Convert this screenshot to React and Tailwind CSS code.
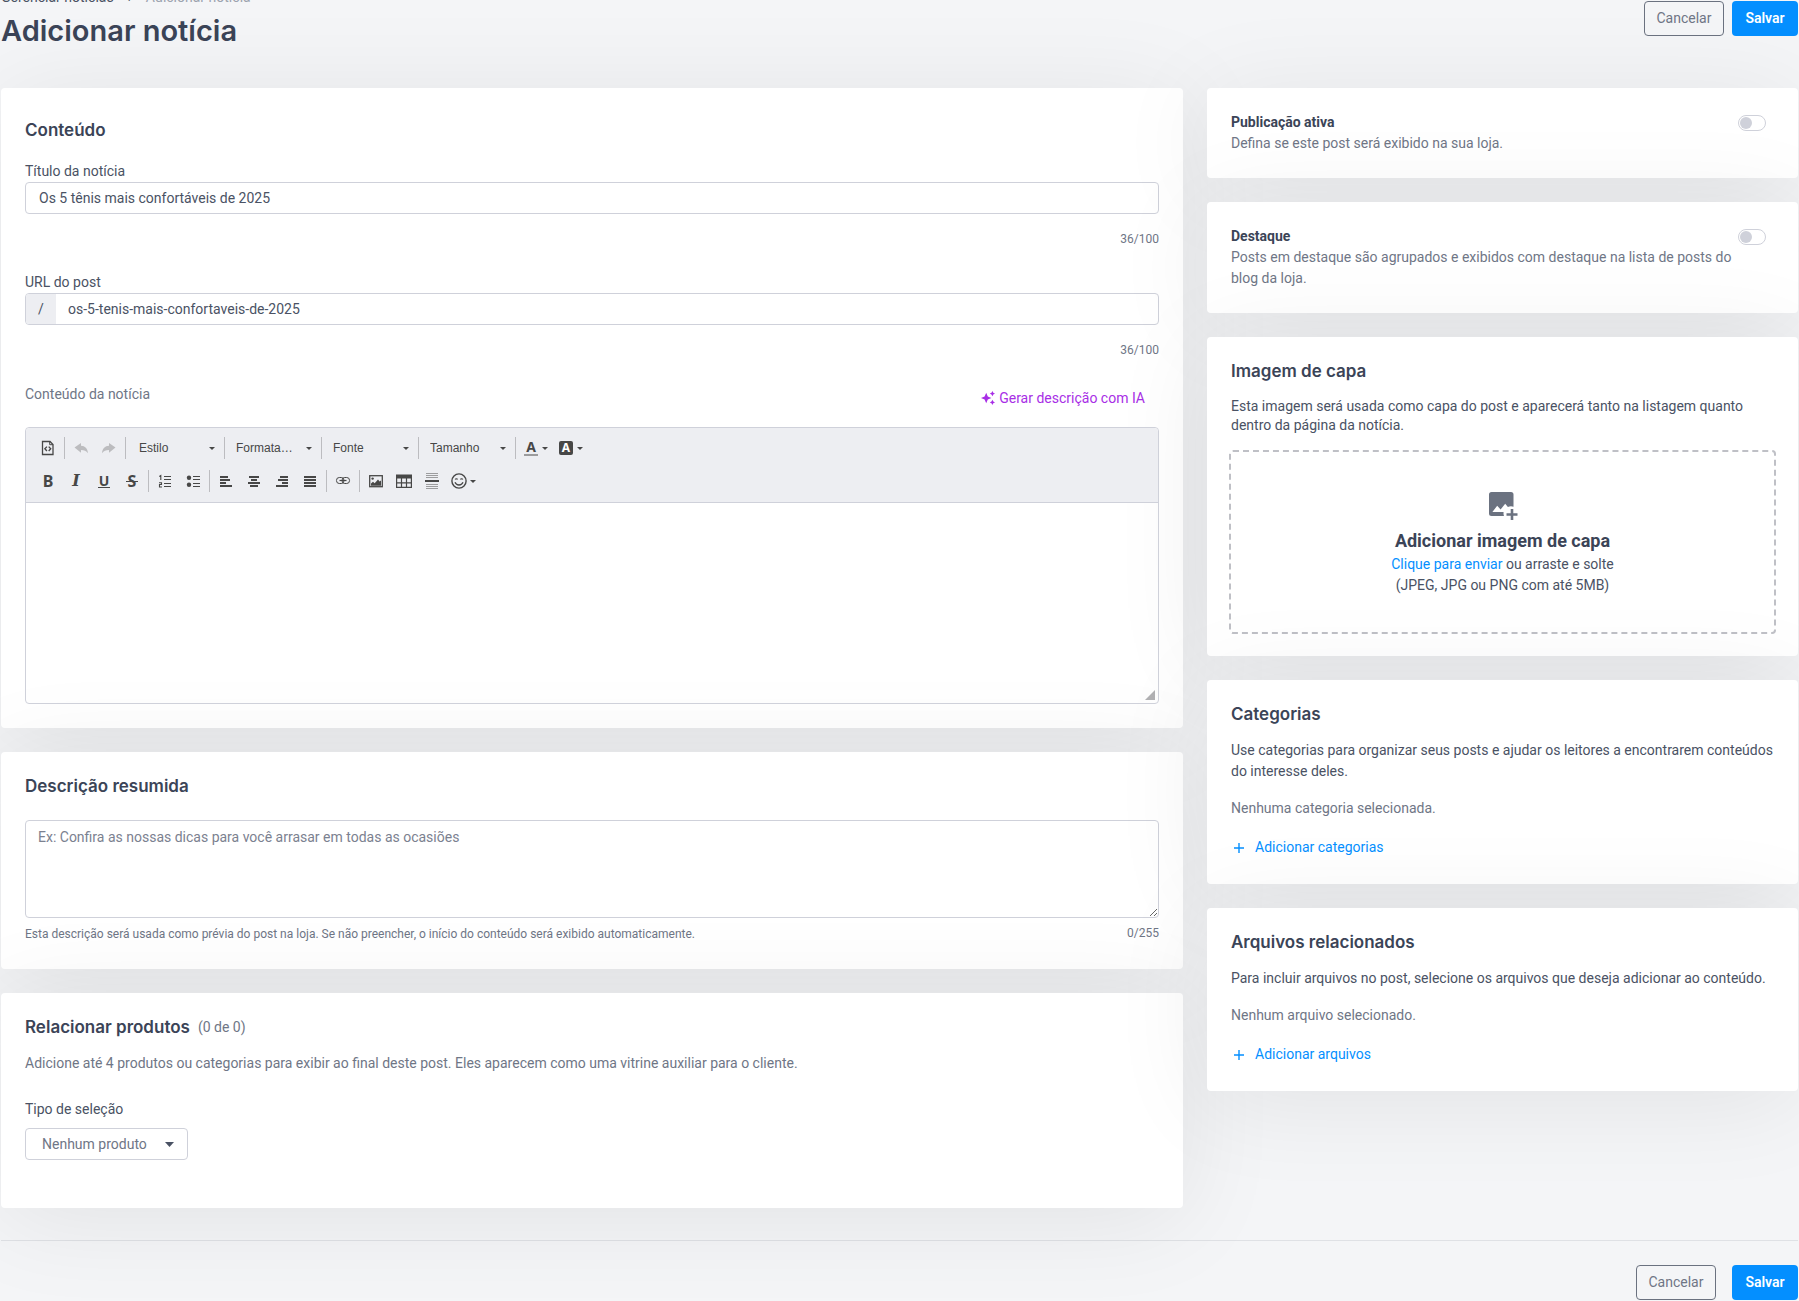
import { useState } from 'react'

const toolBtn = 'flex h-7 w-7 shrink-0 items-center justify-center text-[#474747]'
const fieldBorder = 'rounded border border-[#cfd1da]'

function Card({ className = '', children }) {
  return (
    <section className={`rounded bg-white p-6 shadow-[0_10px_100px_rgba(0,0,0,0.08)] ${className}`}>
      {children}
    </section>
  )
}

function Heading({ children }) {
  return <h2 className="font-['Inter',sans-serif] text-[17px] leading-5 font-semibold text-[#3b4457]">{children}</h2>
}

function Caret({ className = '' }) {
  return (
    <svg className={className} width="6" height="3" viewBox="0 0 6 3" aria-hidden="true">
      <path d="M0 0h6L3 3z" fill="currentColor" />
    </svg>
  )
}

function Icon({ children }) {
  return (
    <svg width="16" height="16" viewBox="0 0 16 16" fill="none" stroke="currentColor" aria-hidden="true">
      {children}
    </svg>
  )
}

// Each bar is [x, width], drawn top to bottom
function Bars({ rows }) {
  return (
    <Icon>
      {rows.map(([x, w], i) => (
        <rect key={i} x={x} y={3 + i * 3} width={w} height="2" fill="currentColor" stroke="none" />
      ))}
    </Icon>
  )
}

function Separator() {
  return <span className="mx-0.5 h-[22px] w-px shrink-0 bg-[#bcbcc0]" />
}

function Tool({ label, disabled, children }) {
  return (
    <button type="button" aria-label={label} disabled={disabled} className={`${toolBtn} disabled:text-[#bcbcbf]`}>
      {children}
    </button>
  )
}

function MenuTool({ label, children }) {
  return (
    <button type="button" aria-label={label} className="flex h-7 w-[35px] shrink-0 items-center gap-[3px] pl-[5px] text-[#474747]">
      {children}
      <Caret />
    </button>
  )
}

function Combo({ label }) {
  return (
    <span className="relative flex h-7 w-[92px] shrink-0 items-center text-[#474747]">
      <select
        aria-label={label}
        className="h-full w-full appearance-none bg-transparent pl-[9px] font-['Liberation_Sans',Arial,sans-serif] text-xs outline-none"
      >
        <option>{label}</option>
      </select>
      <Caret className="pointer-events-none absolute right-[7px]" />
    </span>
  )
}

function Toolbar() {
  return (
    <div className="flex flex-col gap-[5px] rounded-t border-b border-[#cfd1da] bg-[#edeef2] px-2 pt-1.5 pb-[7px]">
      <div className="flex items-center">
        <Tool label="Código-Fonte">
          <Icon>
            <path d="M2.5 1.5h7.5l3 3v10H2.5z" strokeWidth="1.3" />
            <path d="M9.7 1.5v3.2H13" strokeWidth="1" />
            <path d="M6.9 6.6L4.9 8.8l2 2.2M8.7 6.6l2 2.2-2 2.2" strokeWidth="1.4" />
          </Icon>
        </Tool>
        <Separator />
        <Tool label="Desfazer" disabled>
          <Icon>
            <path d="M1.5 7.6L8 3v2.8c4 .2 6.6 2.6 7 7.4-1.7-2.3-3.8-3.2-7-3.2v2.8z" fill="currentColor" stroke="none" />
          </Icon>
        </Tool>
        <Tool label="Refazer" disabled>
          <Icon>
            <path d="M14.5 7.6L8 3v2.8c-4 .2-6.6 2.6-7 7.4 1.7-2.3 3.8-3.2 7-3.2v2.8z" fill="currentColor" stroke="none" />
          </Icon>
        </Tool>
        <Separator />
        <div className="flex items-center pl-0.5">
          <Combo label="Estilo" />
          <Separator />
          <Combo label="Formata…" />
          <Separator />
          <Combo label="Fonte" />
          <Separator />
          <Combo label="Tamanho" />
          <Separator />
        </div>
        <MenuTool label="Cor do texto">
          <span className="flex h-4 w-4 flex-col items-center font-['Noto_Sans',sans-serif] text-sm leading-[14px] font-bold">
            A
            <span className="h-0.5 w-[14px] shrink-0 bg-[#9b9b9d]" />
          </span>
        </MenuTool>
        <MenuTool label="Cor do fundo">
          <span className="mx-px flex h-[14px] w-[14px] items-center justify-center rounded-xs bg-[#474747] font-['Noto_Sans',sans-serif] text-xs leading-[14px] font-bold text-white">
            A
          </span>
        </MenuTool>
      </div>

      <div className="flex items-center">
        <Tool label="Negrito">
          <span className="font-['Noto_Sans',sans-serif] text-base leading-4 font-bold">B</span>
        </Tool>
        <Tool label="Itálico">
          <span className="font-['DejaVu_Serif',serif] text-base leading-4 font-bold italic">I</span>
        </Tool>
        <Tool label="Sublinhado">
          <span className="flex w-3 flex-col items-center border-b border-current font-['Noto_Sans',sans-serif] text-sm leading-3 font-bold">U</span>
        </Tool>
        <Tool label="Tachado">
          <span className="relative flex w-3 justify-center font-['Noto_Sans',sans-serif] text-base leading-4 font-bold">
            S
            <span className="absolute inset-x-0 top-2 h-px bg-current" />
          </span>
        </Tool>
        <Separator />
        <Tool label="Lista numerada">
          <Icon>
            <path d="M7 3.5h7M7 6.5h7M7 10.5h7M7 13.5h7" strokeWidth="1" />
            <path d="M2.300 3.500L3.800 2.500V7M2 9.700h2.500v1.800H2.500V14h2.500" strokeWidth="1.1" />
          </Icon>
        </Tool>
        <Tool label="Lista sem números">
          <Icon>
            <circle cx="4" cy="4.7" r="2.2" fill="currentColor" stroke="none" />
            <circle cx="4" cy="11.7" r="2.2" fill="currentColor" stroke="none" />
            <path d="M8 3.5h7M8 6.5h7M8 10.5h7M8 13.5h7" strokeWidth="1" />
          </Icon>
        </Tool>
        <Separator />
        <Tool label="Alinhar à esquerda"><Bars rows={[[2, 8], [2, 10], [2, 6], [2, 12]]} /></Tool>
        <Tool label="Centralizar"><Bars rows={[[3, 10], [5, 6], [2, 12], [4, 8]]} /></Tool>
        <Tool label="Alinhar à direita"><Bars rows={[[6, 8], [4, 10], [8, 6], [2, 12]]} /></Tool>
        <Tool label="Justificado"><Bars rows={[[2, 12], [2, 12], [2, 12], [2, 12]]} /></Tool>
        <Separator />
        <Tool label="Link">
          <Icon>
            <rect x="1.500" y="4.500" width="7.500" height="6" rx="2.800" strokeWidth="1" />
            <rect x="7" y="4.500" width="7.500" height="6" rx="2.800" strokeWidth="1" />
            <path d="M4.500 7.500h7" strokeWidth="1.200" />
          </Icon>
        </Tool>
        <Separator />
        <Tool label="Imagem">
          <Icon>
            <rect x="1.7" y="2.7" width="12.6" height="11" strokeWidth="1.3" />
            <circle cx="4.600" cy="5.600" r="1.200" fill="currentColor" stroke="none" />
            <path d="M3 12.800V10.500l2-1.700 1.700 1.400L10 6.500l1.600 2 1.400-.9v5.200z" fill="currentColor" stroke="none" />
          </Icon>
        </Tool>
        <Tool label="Tabela">
          <Icon>
            <path d="M0 1.500h16v4H0z" fill="currentColor" stroke="none" />
            <path d="M.6 5v9.400h14.800V5M.6 9.800h14.800M5.500 5v9M10.500 5v9" strokeWidth="1.200" />
          </Icon>
        </Tool>
        <Tool label="Linha horizontal">
          <Icon>
            <path d="M2 .5h12M2 2.500h12M2 4.500h12M2 11.500h12M2 13.500h12M2 15.500h12" stroke="#9c9c9e" />
            <path d="M1 8h14" strokeWidth="2" />
          </Icon>
        </Tool>
        <MenuTool label="Emoji">
          <Icon>
            <circle cx="8" cy="8" r="7.1" strokeWidth="1.4" />
            <path d="M4.300 6.500c.3-1 1.900-1 2.200 0M9.500 6.500c.3-1 1.900-1 2.200 0" strokeWidth="1.200" />
            <path d="M4 9.300c1.500 3.600 6.500 3.600 8 0" strokeWidth="1.300" />
          </Icon>
        </MenuTool>
      </div>
    </div>
  )
}

function Counter({ value, max }) {
  return <span className="text-right text-xs leading-[18px] text-[#6f7686]">{value.length}/{max}</span>
}

function Toggle({ id }) {
  return (
    <input
      id={id}
      type="checkbox"
      role="switch"
      className="mt-[3px] mr-2 h-4 w-7 shrink-0 appearance-none rounded-full border border-[#cfd1da] bg-white p-px before:block before:h-3 before:w-3 before:rounded-full before:bg-[#cfd1da] checked:before:translate-x-3"
    />
  )
}

function ToggleCard({ id, title, text }) {
  return (
    <Card className="flex items-start">
      <div className="flex-1">
        <label htmlFor={id} className="block font-bold text-[#3b4457]">{title}</label>
        <p className="text-[#6f7686]">{text}</p>
      </div>
      <Toggle id={id} />
    </Card>
  )
}

function AddButton({ children }) {
  return (
    <button type="button" className="mt-4 flex h-[25px] items-center gap-[11px] pl-[3px] text-[#048fff]">
      <svg width="10" height="10" viewBox="0 0 10 10" stroke="currentColor" strokeWidth="1.4" aria-hidden="true">
        <path d="M5 0v10M0 5h10" />
      </svg>
      {children}
    </button>
  )
}

function Actions({ className }) {
  return (
    <div className={`flex justify-end ${className}`}>
      <button type="button" className="h-[35px] w-20 rounded border border-[#6b7280] text-[#6f7686]">Cancelar</button>
      <button type="submit" className="h-[35px] w-[66px] rounded bg-[#048fff] font-semibold text-white">Salvar</button>
    </div>
  )
}

export default function App() {
  const [title, setTitle] = useState('Os 5 tênis mais confortáveis de 2025')
  const [slug, setSlug] = useState('os-5-tenis-mais-confortaveis-de-2025')
  const [summary, setSummary] = useState('')

  return (
    <form
      className="min-h-screen overflow-hidden bg-[#f4f5f7] px-px pb-px font-['Roboto',sans-serif] text-sm leading-[21px] text-[#4a5264]"
      onSubmit={e => e.preventDefault()}
    >
      <header className="mb-[34px] flex items-start justify-between">
        <div>
          <nav className="-mt-[13px] flex gap-[14px]">
            <a href="#noticias">Gerenciar notícias</a>
            <span>›</span>
            <span className="text-[#9ca3af]">Adicionar notícia</span>
          </nav>
          <h1 className="font-['Inter',sans-serif] text-[29px] leading-[46px] font-semibold text-[#3b4457]">Adicionar notícia</h1>
        </div>
        <Actions className="mt-px gap-2" />
      </header>

      <div className="grid grid-cols-[2fr_1fr] items-start gap-6">
        <div className="flex flex-col gap-6">
          <Card className="flex flex-col pt-8">
            <Heading>Conteúdo</Heading>

            <label htmlFor="title" className="mt-5 leading-[22px]">Título da notícia</label>
            <input
              id="title"
              value={title}
              onChange={e => setTitle(e.target.value)}
              className={`mb-4 h-8 px-[13px] ${fieldBorder}`}
            />
            <Counter value={title} max={100} />

            <label htmlFor="slug" className="mt-[23px] leading-[22px]">URL do post</label>
            <div className={`mb-4 flex h-8 overflow-hidden ${fieldBorder}`}>
              <span className="flex w-[30px] items-center justify-center bg-[#edeef2]">/</span>
              <input
                id="slug"
                value={slug}
                onChange={e => setSlug(e.target.value)}
                className="min-w-0 flex-1 px-3"
              />
            </div>
            <Counter value={slug} max={100} />

            <div className="mt-[23px] mb-[13px] flex items-start justify-between">
              <label htmlFor="content" className="leading-6 text-[#6f7686]">Conteúdo da notícia</label>
              <button type="button" className="flex h-8 items-center gap-1 pr-[14px] text-[#a82ee6]">
                <svg width="14" height="14" viewBox="0 0 14 14" fill="currentColor" aria-hidden="true">
                  <path d="M5.200 1.800L6.800 5.400 10.400 7 6.800 8.600 5.200 12.200 3.600 8.600 0 7l3.600-1.600z" />
                  <path d="M11.400 0l.9 1.800 1.700.8-1.700.8-.9 1.800-.9-1.800-1.700-.8 1.700-.8zM11.400 8.800l.9 1.800 1.700.8-1.700.8-.9 1.800-.9-1.800-1.700-.8 1.700-.8z" />
                </svg>
                Gerar descrição com IA
              </button>
            </div>

            <div className={`relative ${fieldBorder}`}>
              <Toolbar />
              <textarea id="content" className="block h-[200px] w-full resize-none rounded-b p-4 outline-none" />
              <svg className="absolute right-[3px] bottom-[3px]" width="10" height="10" viewBox="0 0 10 10" aria-hidden="true">
                <path d="M10 0v10H0z" fill="#b0b0b2" />
              </svg>
            </div>
          </Card>

          <Card>
            <Heading>Descrição resumida</Heading>
            <textarea
              aria-label="Descrição resumida"
              placeholder="Ex: Confira as nossas dicas para você arrasar em todas as ocasiões"
              value={summary}
              onChange={e => setSummary(e.target.value)}
              className={`mt-6 block h-[98px] w-full px-3 py-1.5 placeholder:text-[#7b8190] ${fieldBorder}`}
            />
            <div className="mt-1.5 flex items-start justify-between text-[#6f7686]">
              <p className="text-xs leading-[21px]">
                Esta descrição será usada como prévia do post na loja. Se não preencher, o início do conteúdo será exibido automaticamente.
              </p>
              <Counter value={summary} max={255} />
            </div>
          </Card>

          <Card>
            <div className="flex items-center gap-2">
              <Heading>Relacionar produtos</Heading>
              <span className="leading-5 text-[#6f7686]">(0 de 0)</span>
            </div>
            <p className="mt-4 mb-6 text-[#6f7686]">
              Adicione até 4 produtos ou categorias para exibir ao final deste post. Eles aparecem como uma vitrine auxiliar para o cliente.
            </p>
            <label htmlFor="selection" className="block leading-[22px]">Tipo de seleção</label>
            <div className="relative mt-2 mb-6 flex w-[163px] items-center text-[#6f7686]">
              <select id="selection" className={`h-8 w-full appearance-none bg-white pl-4 ${fieldBorder}`}>
                <option>Nenhum produto</option>
              </select>
              <svg className="pointer-events-none absolute right-[14px]" width="9" height="5" viewBox="0 0 9 5" aria-hidden="true">
                <path d="M0 0h9L4.500 5z" fill="#4a5264" />
              </svg>
            </div>
          </Card>
        </div>

        <aside className="flex flex-col gap-6">
          <ToggleCard id="active" title="Publicação ativa" text="Defina se este post será exibido na sua loja." />
          <ToggleCard
            id="featured"
            title="Destaque"
            text="Posts em destaque são agrupados e exibidos com destaque na lista de posts do blog da loja."
          />

          <Card>
            <Heading>Imagem de capa</Heading>
            <p className="mt-4 leading-[19px]">
              Esta imagem será usada como capa do post e aparecerá tanto na listagem quanto dentro da página da notícia.
            </p>
            <div className="-mx-0.5 mt-[15px] -mb-0.5 flex h-[184px] flex-col items-center justify-center rounded border-2 border-dashed border-[#bfc0c6]">
              <svg width="32" height="32" viewBox="0 0 32 32" aria-hidden="true">
                <path
                  d="M4.5 4H24a2.5 2.5 0 0 1 2.5 2.5v12.2a8 8 0 0 0-5.6.2L18.2 15.7 13.6 21.5l-3.4-3.8L5.4 24h11.2a8 8 0 0 0 .4 4H4.5A2.5 2.5 0 0 1 2 25.5v-19A2.5 2.5 0 0 1 4.5 4z"
                  fill="#6b7280"
                />
                <path d="M25 21v11M19.5 26.5h11" stroke="#6b7280" strokeWidth="2.6" />
              </svg>
              <h3 className="mt-2 text-lg leading-[26px] font-bold text-[#3b4457]">Adicionar imagem de capa</h3>
              <p><button type="button" className="text-[#048fff]">Clique para enviar</button> ou arraste e solte</p>
              <p>(JPEG, JPG ou PNG com até 5MB)</p>
            </div>
          </Card>

          <Card>
            <Heading>Categorias</Heading>
            <p className="my-4">Use categorias para organizar seus posts e ajudar os leitores a encontrarem conteúdos do interesse deles.</p>
            <p className="text-[#6f7686]">Nenhuma categoria selecionada.</p>
            <AddButton>Adicionar categorias</AddButton>
          </Card>

          <Card>
            <Heading>Arquivos relacionados</Heading>
            <p className="my-4">Para incluir arquivos no post, selecione os arquivos que deseja adicionar ao conteúdo.</p>
            <p className="text-[#6f7686]">Nenhum arquivo selecionado.</p>
            <AddButton>Adicionar arquivos</AddButton>
          </Card>
        </aside>
      </div>

      <Actions className="mt-8 gap-4 border-t border-[#dfe1e5] pt-6" />
    </form>
  )
}
